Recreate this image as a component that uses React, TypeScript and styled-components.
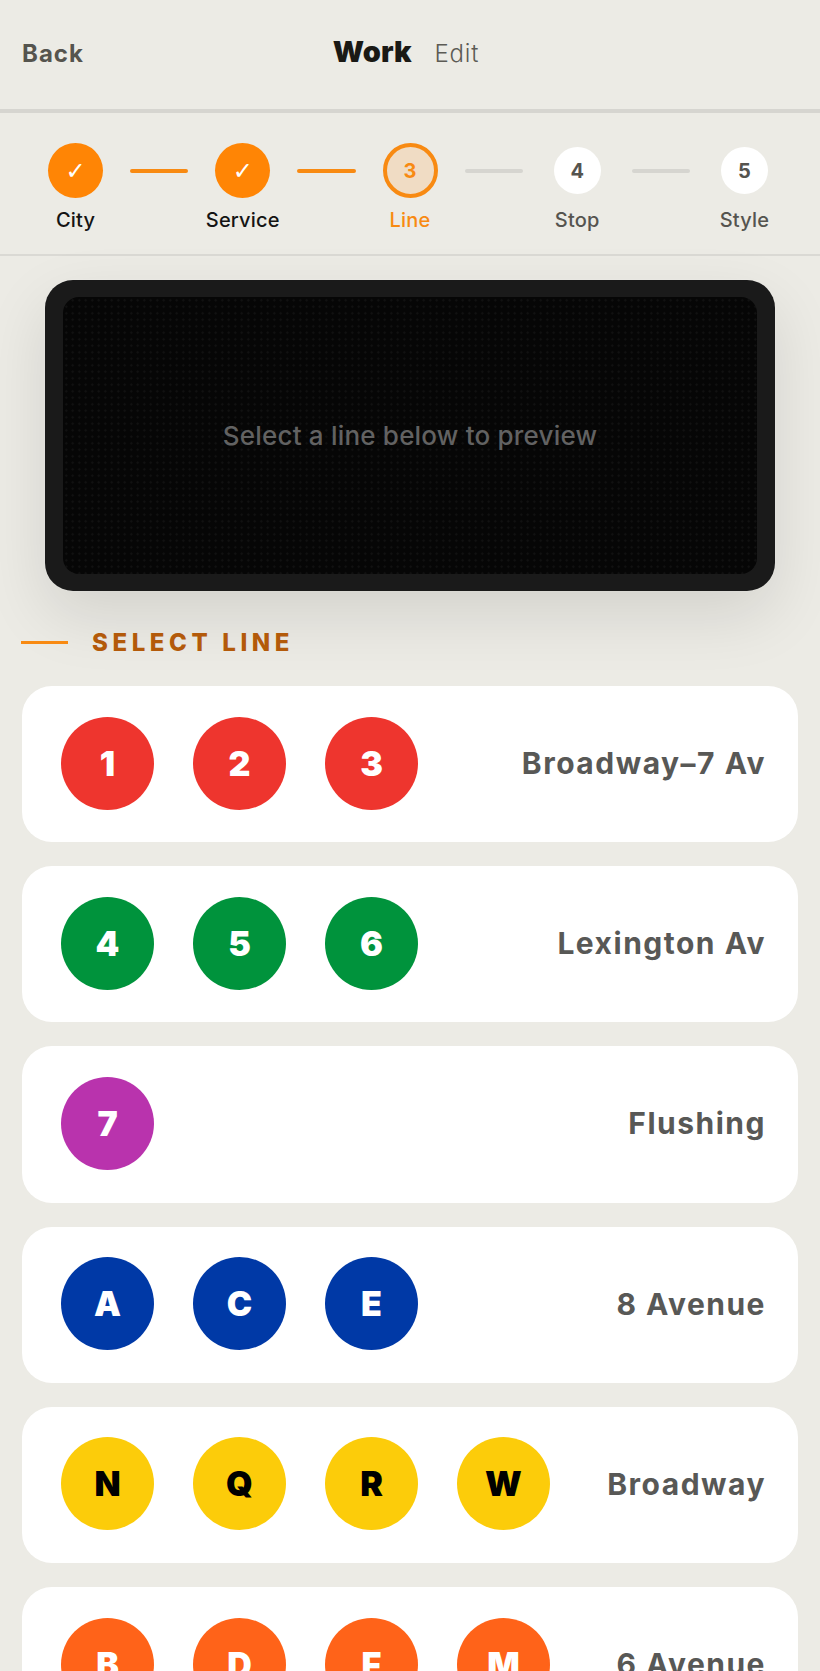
import { Fragment } from "react";
import styled, { createGlobalStyle } from "styled-components";

const GlobalStyle = createGlobalStyle`
  html, body {
    margin: 0;
    padding: 0;
    background: #ecebe5;
    overflow: hidden;
  }
`;

const Page = styled.div`
  width: 820px;
  height: 1671px;
  overflow: hidden;
  background: #ecebe5;
  font-family: "Inter", "Liberation Sans", sans-serif;
`;

const Header = styled.header`
  display: grid;
  grid-template-columns: 1fr auto 1fr;
  align-items: baseline;
  height: 113px;
  box-sizing: border-box;
  padding: 33px 30px 0 22px;
  border-bottom: 4px solid #d6d5d0;
`;

const BackLink = styled.span`
  font-size: 24px;
  line-height: 38px;
  font-weight: 700;
  letter-spacing: 1px;
  color: #55544e;
`;

const TitleRow = styled.div`
  display: flex;
  align-items: baseline;
  gap: 23px;
`;

const Title = styled.span`
  font-size: 29px;
  line-height: 38px;
  font-weight: 900;
  color: #1a1915;
`;

const EditLink = styled.span`
  font-size: 24px;
  line-height: 38px;
  font-weight: 300;
  letter-spacing: 0.8px;
  color: #5c5b55;
`;

const Stepper = styled.nav`
  display: flex;
  align-items: flex-start;
  height: 143px;
  box-sizing: border-box;
  padding: 30px 48px 0;
  border-bottom: 2px solid #dad9d4;
`;

const Step = styled.div`
  display: flex;
  flex-direction: column;
  align-items: center;
  width: 55px;
  flex: none;
`;

const Dot = styled.div<{ $state: StepState }>`
  display: flex;
  align-items: center;
  justify-content: center;
  box-sizing: border-box;
  flex: none;
  border-radius: 50%;
  font-size: 20px;
  font-weight: 700;
  width: ${({ $state }) => ($state === "todo" ? "47px" : "55px")};
  height: ${({ $state }) => ($state === "todo" ? "47px" : "55px")};
  margin: ${({ $state }) => ($state === "todo" ? "4px 0" : "0")};
  background: ${({ $state }) =>
    $state === "done" ? "#ff8505" : $state === "active" ? "#f0dcc4" : "#ffffff"};
  border: ${({ $state }) => ($state === "active" ? "4px solid #f88a12" : "none")};
  color: ${({ $state }) =>
    $state === "done" ? "#ffffff" : $state === "active" ? "#f88a12" : "#55544f"};
`;

const CheckMark = styled.span`
  font-family: "DejaVu Sans", sans-serif;
  font-size: 24px;
  font-weight: 400;
  line-height: 1;
`;

const StepLabel = styled.span<{ $state: StepState }>`
  margin-top: 9px;
  font-size: 20px;
  line-height: 26px;
  font-weight: 500;
  letter-spacing: 0.2px;
  white-space: nowrap;
  color: ${({ $state }) =>
    $state === "done" ? "#141414" : $state === "active" ? "#f88a12" : "#55544f"};
`;

const Connector = styled.div<{ $on: boolean }>`
  flex: 1;
  height: 4px;
  margin: 26px 27px 0;
  border-radius: 2px;
  background: ${({ $on }) => ($on ? "#f88a12" : "#d6d5d0")};
`;

const Preview = styled.section`
  display: flex;
  margin: 24px 45px 0;
  height: 311px;
  box-sizing: border-box;
  padding: 17px 18px;
  border-radius: 28px;
  background: #1a1a1a;
  box-shadow: 0 24px 64px rgba(0, 0, 0, 0.11), 0 0 0 1px rgba(255, 255, 255, 0.12);
`;

const Screen = styled.div`
  flex: 1;
  display: flex;
  align-items: center;
  justify-content: center;
  border-radius: 16px;
  background-color: #060606;
  background-image: radial-gradient(#121212 1px, transparent 1.2px);
  background-size: 6.5px 6.5px;
`;

const PreviewHint = styled.span`
  font-size: 26px;
  font-weight: 500;
  letter-spacing: 0.2px;
  color: #626262;
`;

const SectionHeading = styled.div`
  display: flex;
  align-items: center;
  gap: 24px;
  margin: 35px 22px 0 21px;
  height: 32px;
`;

const HeadingRule = styled.span`
  width: 47px;
  height: 3px;
  background: #f88a12;
`;

const HeadingText = styled.h2`
  margin: 0;
  font-size: 24px;
  font-weight: 800;
  letter-spacing: 4.6px;
  color: #b35a0a;
`;

const LineList = styled.div`
  display: flex;
  flex-direction: column;
  gap: 24px;
  margin: 28px 22px 0;
`;

const LineCard = styled.div`
  display: flex;
  align-items: center;
  justify-content: space-between;
  flex: none;
  height: 156.2px;
  box-sizing: border-box;
  padding: 0 32px 2px 39px;
  border-radius: 30px;
  background: #ffffff;
`;

const Badges = styled.div`
  display: flex;
  gap: 39px;
`;

const Badge = styled.div<{ $bg: string; $fg: string }>`
  display: flex;
  align-items: center;
  justify-content: center;
  width: 93px;
  height: 93px;
  border-radius: 50%;
  font-size: 34px;
  font-weight: 900;
  background: ${({ $bg }) => $bg};
  color: ${({ $fg }) => $fg};
`;

const LineName = styled.span`
  font-size: 30px;
  font-weight: 700;
  letter-spacing: 1.5px;
  color: #585856;
  white-space: nowrap;
`;

type StepState = "done" | "active" | "todo";

const steps: { label: string; mark: string; state: StepState }[] = [
  { label: "City", mark: "✓", state: "done" },
  { label: "Service", mark: "✓", state: "done" },
  { label: "Line", mark: "3", state: "active" },
  { label: "Stop", mark: "4", state: "todo" },
  { label: "Style", mark: "5", state: "todo" },
];

const lines = [
  { name: "Broadway–7 Av", bg: "#ee352e", fg: "#ffffff", trains: ["1", "2", "3"] },
  { name: "Lexington Av", bg: "#00933c", fg: "#ffffff", trains: ["4", "5", "6"] },
  { name: "Flushing", bg: "#b933ad", fg: "#ffffff", trains: ["7"] },
  { name: "8 Avenue", bg: "#0039a6", fg: "#ffffff", trains: ["A", "C", "E"] },
  { name: "Broadway", bg: "#fccc0a", fg: "#000000", trains: ["N", "Q", "R", "W"] },
  { name: "6 Avenue", bg: "#ff6319", fg: "#ffffff", trains: ["B", "D", "F", "M"] },
];

export default function App() {
  return (
    <Page>
      <GlobalStyle />
      <Header>
        <BackLink>Back</BackLink>
        <TitleRow>
          <Title>Work</Title>
          <EditLink>Edit</EditLink>
        </TitleRow>
      </Header>
      <Stepper>
        {steps.map((step, i) => (
          <Fragment key={step.label}>
            <Step>
              <Dot $state={step.state}>
                {step.state === "done" ? <CheckMark>{step.mark}</CheckMark> : step.mark}
              </Dot>
              <StepLabel $state={step.state}>{step.label}</StepLabel>
            </Step>
            {i < steps.length - 1 && <Connector $on={i < 2} />}
          </Fragment>
        ))}
      </Stepper>
      <Preview>
        <Screen>
          <PreviewHint>Select a line below to preview</PreviewHint>
        </Screen>
      </Preview>
      <SectionHeading>
        <HeadingRule />
        <HeadingText>SELECT LINE</HeadingText>
      </SectionHeading>
      <LineList>
        {lines.map((line) => (
          <LineCard key={line.name}>
            <Badges>
              {line.trains.map((t) => (
                <Badge key={t} $bg={line.bg} $fg={line.fg}>
                  {t}
                </Badge>
              ))}
            </Badges>
            <LineName>{line.name}</LineName>
          </LineCard>
        ))}
      </LineList>
    </Page>
  );
}
